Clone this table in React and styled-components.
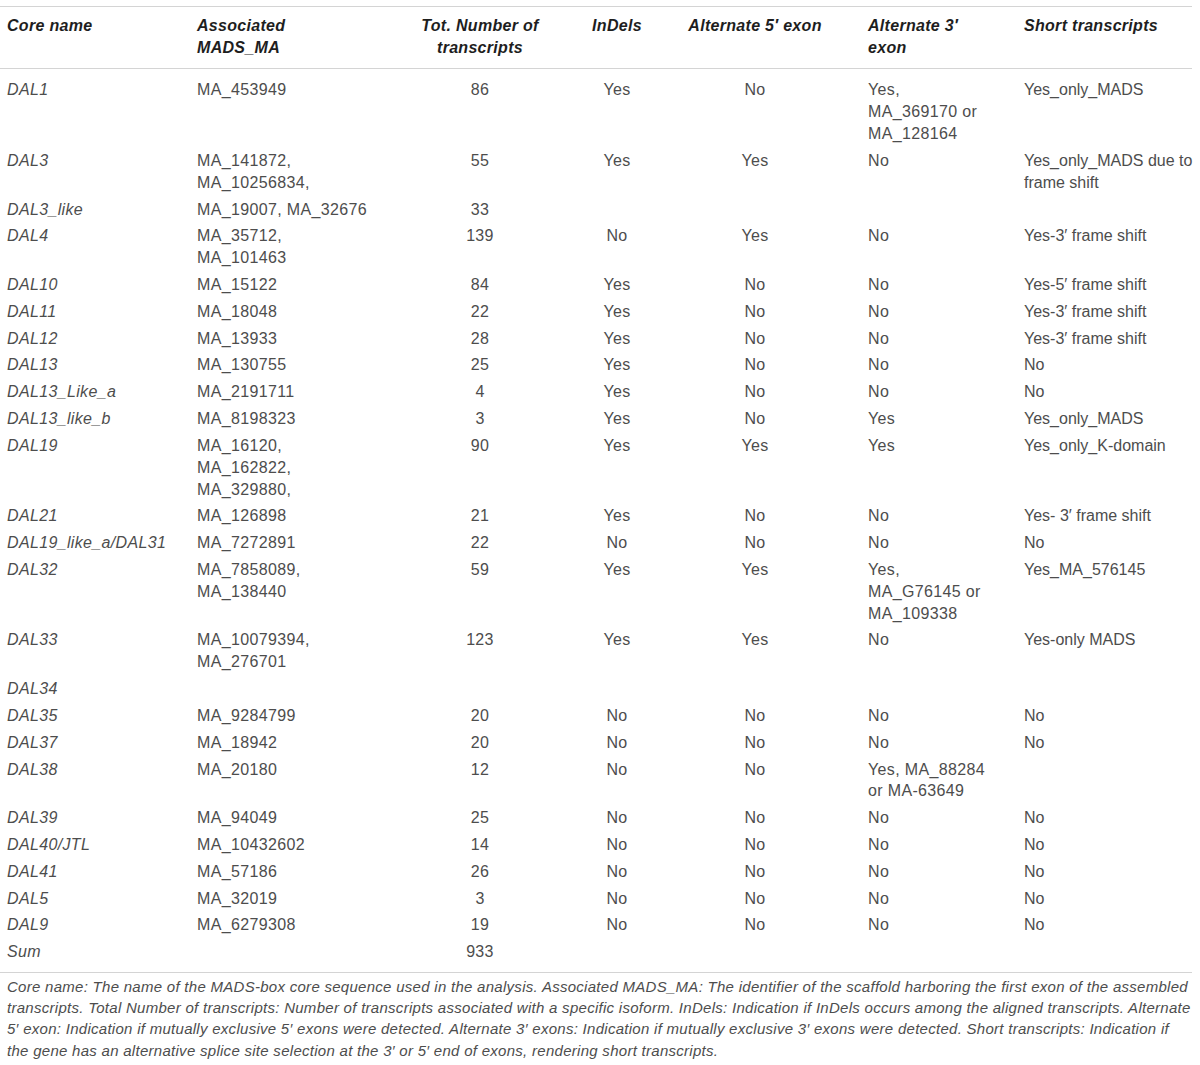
import React from "react";
import styled, { createGlobalStyle } from "styled-components";

const GlobalStyle = createGlobalStyle`
  body {
    margin: 0;
    background: #ffffff;
  }
`;

const Page = styled.div`
  width: 1192px;
  padding-top: 6px;
  font-family: "Liberation Sans", Arial, Helvetica, sans-serif;
`;

const Table = styled.table`
  width: 1192px;
  border-collapse: collapse;
  table-layout: fixed;
  border-top: 1px solid #d4d4d4;
  border-bottom: 1px solid #d4d4d4;
  font-size: 16px;
  line-height: 21.9px;
`;

const HeadRow = styled.tr`
  border-bottom: 1px solid #d4d4d4;
`;

const Th = styled.th`
  padding: 7.6px 7px 9.4px;
  text-align: ${(p) => p.$align || "left"};
  vertical-align: top;
  font-weight: bold;
  font-style: italic;
  letter-spacing: 0.3px;
  color: #1e1e1e;
`;

const Row = styled.tr`
  &:first-child td {
    padding-top: 10.5px;
  }
  &:last-child td {
    padding-bottom: 8.6px;
  }
`;

const Td = styled.td`
  padding: 2.45px 7px;
  text-align: ${(p) => p.$align || "left"};
  vertical-align: top;
  font-style: ${(p) => (p.$italic ? "italic" : "normal")};
  letter-spacing: ${(p) => (p.$tight ? "0" : "0.35px")};
  color: #4d4d4d;
  white-space: nowrap;
`;

const Note = styled.p`
  margin: 3px 0 0;
  padding-left: 7px;
  font-size: 15px;
  line-height: 21.3px;
  font-style: italic;
  letter-spacing: 0.28px;
  color: #4d4d4d;
  white-space: nowrap;
`;

const columns = [
  { key: "core", title: ["Core name"], width: 190 },
  { key: "ma", title: ["Associated", "MADS_MA"], width: 185 },
  { key: "tot", title: ["Tot. Number of", "transcripts"], width: 210, align: "center" },
  { key: "indel", title: ["InDels"], width: 64, align: "center" },
  { key: "alt5", title: ["Alternate 5\u2032 exon"], width: 212, align: "center" },
  { key: "alt3", title: ["Alternate 3\u2032", "exon"], width: 156 },
  { key: "short", title: ["Short transcripts"], width: 175 },
];

const rows = [
  ["DAL1", ["MA_453949"], "86", "Yes", "No", ["Yes,", "MA_369170 or", "MA_128164"], ["Yes_only_MADS"]],
  ["DAL3", ["MA_141872,", "MA_10256834,"], "55", "Yes", "Yes", ["No"], ["Yes_only_MADS due to", "frame shift"]],
  ["DAL3_like", ["MA_19007, MA_32676"], "33", "", "", [], []],
  ["DAL4", ["MA_35712,", "MA_101463"], "139", "No", "Yes", ["No"], ["Yes-3\u2032 frame shift"]],
  ["DAL10", ["MA_15122"], "84", "Yes", "No", ["No"], ["Yes-5\u2032 frame shift"]],
  ["DAL11", ["MA_18048"], "22", "Yes", "No", ["No"], ["Yes-3\u2032 frame shift"]],
  ["DAL12", ["MA_13933"], "28", "Yes", "No", ["No"], ["Yes-3\u2032 frame shift"]],
  ["DAL13", ["MA_130755"], "25", "Yes", "No", ["No"], ["No"]],
  ["DAL13_Like_a", ["MA_2191711"], "4", "Yes", "No", ["No"], ["No"]],
  ["DAL13_like_b", ["MA_8198323"], "3", "Yes", "No", ["Yes"], ["Yes_only_MADS"]],
  ["DAL19", ["MA_16120,", "MA_162822,", "MA_329880,"], "90", "Yes", "Yes", ["Yes"], ["Yes_only_K-domain"]],
  ["DAL21", ["MA_126898"], "21", "Yes", "No", ["No"], ["Yes- 3\u2032 frame shift"]],
  ["DAL19_like_a/DAL31", ["MA_7272891"], "22", "No", "No", ["No"], ["No"]],
  ["DAL32", ["MA_7858089,", "MA_138440"], "59", "Yes", "Yes", ["Yes,", "MA_G76145 or", "MA_109338"], ["Yes_MA_576145"]],
  ["DAL33", ["MA_10079394,", "MA_276701"], "123", "Yes", "Yes", ["No"], ["Yes-only MADS"]],
  ["DAL34", [], "", "", "", [], []],
  ["DAL35", ["MA_9284799"], "20", "No", "No", ["No"], ["No"]],
  ["DAL37", ["MA_18942"], "20", "No", "No", ["No"], ["No"]],
  ["DAL38", ["MA_20180"], "12", "No", "No", ["Yes, MA_88284", "or MA-63649"], []],
  ["DAL39", ["MA_94049"], "25", "No", "No", ["No"], ["No"]],
  ["DAL40/JTL", ["MA_10432602"], "14", "No", "No", ["No"], ["No"]],
  ["DAL41", ["MA_57186"], "26", "No", "No", ["No"], ["No"]],
  ["DAL5", ["MA_32019"], "3", "No", "No", ["No"], ["No"]],
  ["DAL9", ["MA_6279308"], "19", "No", "No", ["No"], ["No"]],
  ["Sum", [], "933", "", "", [], []],
];

const noteLines = [
  "Core name: The name of the MADS-box core sequence used in the analysis. Associated MADS_MA: The identifier of the scaffold harboring the first exon of the assembled",
  "transcripts. Total Number of transcripts: Number of transcripts associated with a specific isoform. InDels: Indication if InDels occurs among the aligned transcripts. Alternate",
  "5\u2032 exon: Indication if mutually exclusive 5\u2032 exons were detected. Alternate 3\u2032 exons: Indication if mutually exclusive 3\u2032 exons were detected. Short transcripts: Indication if",
  "the gene has an alternative splice site selection at the 3\u2032 or 5\u2032 end of exons, rendering short transcripts.",
];

const Lines = ({ lines }) =>
  lines.map((line, i) => (
    <React.Fragment key={i}>
      {i > 0 && <br />}
      {line}
    </React.Fragment>
  ));

const App = () => {
  return (
    <Page>
      <GlobalStyle />
      <Table>
        <colgroup>
          {columns.map((c) => (
            <col key={c.key} style={{ width: c.width }} />
          ))}
        </colgroup>
        <thead>
          <HeadRow>
            {columns.map((c) => (
              <Th key={c.key} $align={c.align}>
                <Lines lines={c.title} />
              </Th>
            ))}
          </HeadRow>
        </thead>
        <tbody>
          {rows.map(([core, ma, tot, indel, alt5, alt3, short]) => (
            <Row key={core}>
              <Td $italic>{core}</Td>
              <Td><Lines lines={ma} /></Td>
              <Td $align="center">{tot}</Td>
              <Td $align="center">{indel}</Td>
              <Td $align="center">{alt5}</Td>
              <Td><Lines lines={alt3} /></Td>
              <Td $tight><Lines lines={short} /></Td>
            </Row>
          ))}
        </tbody>
      </Table>
      <Note>
        <Lines lines={noteLines} />
      </Note>
    </Page>
  );
};

export default App;
